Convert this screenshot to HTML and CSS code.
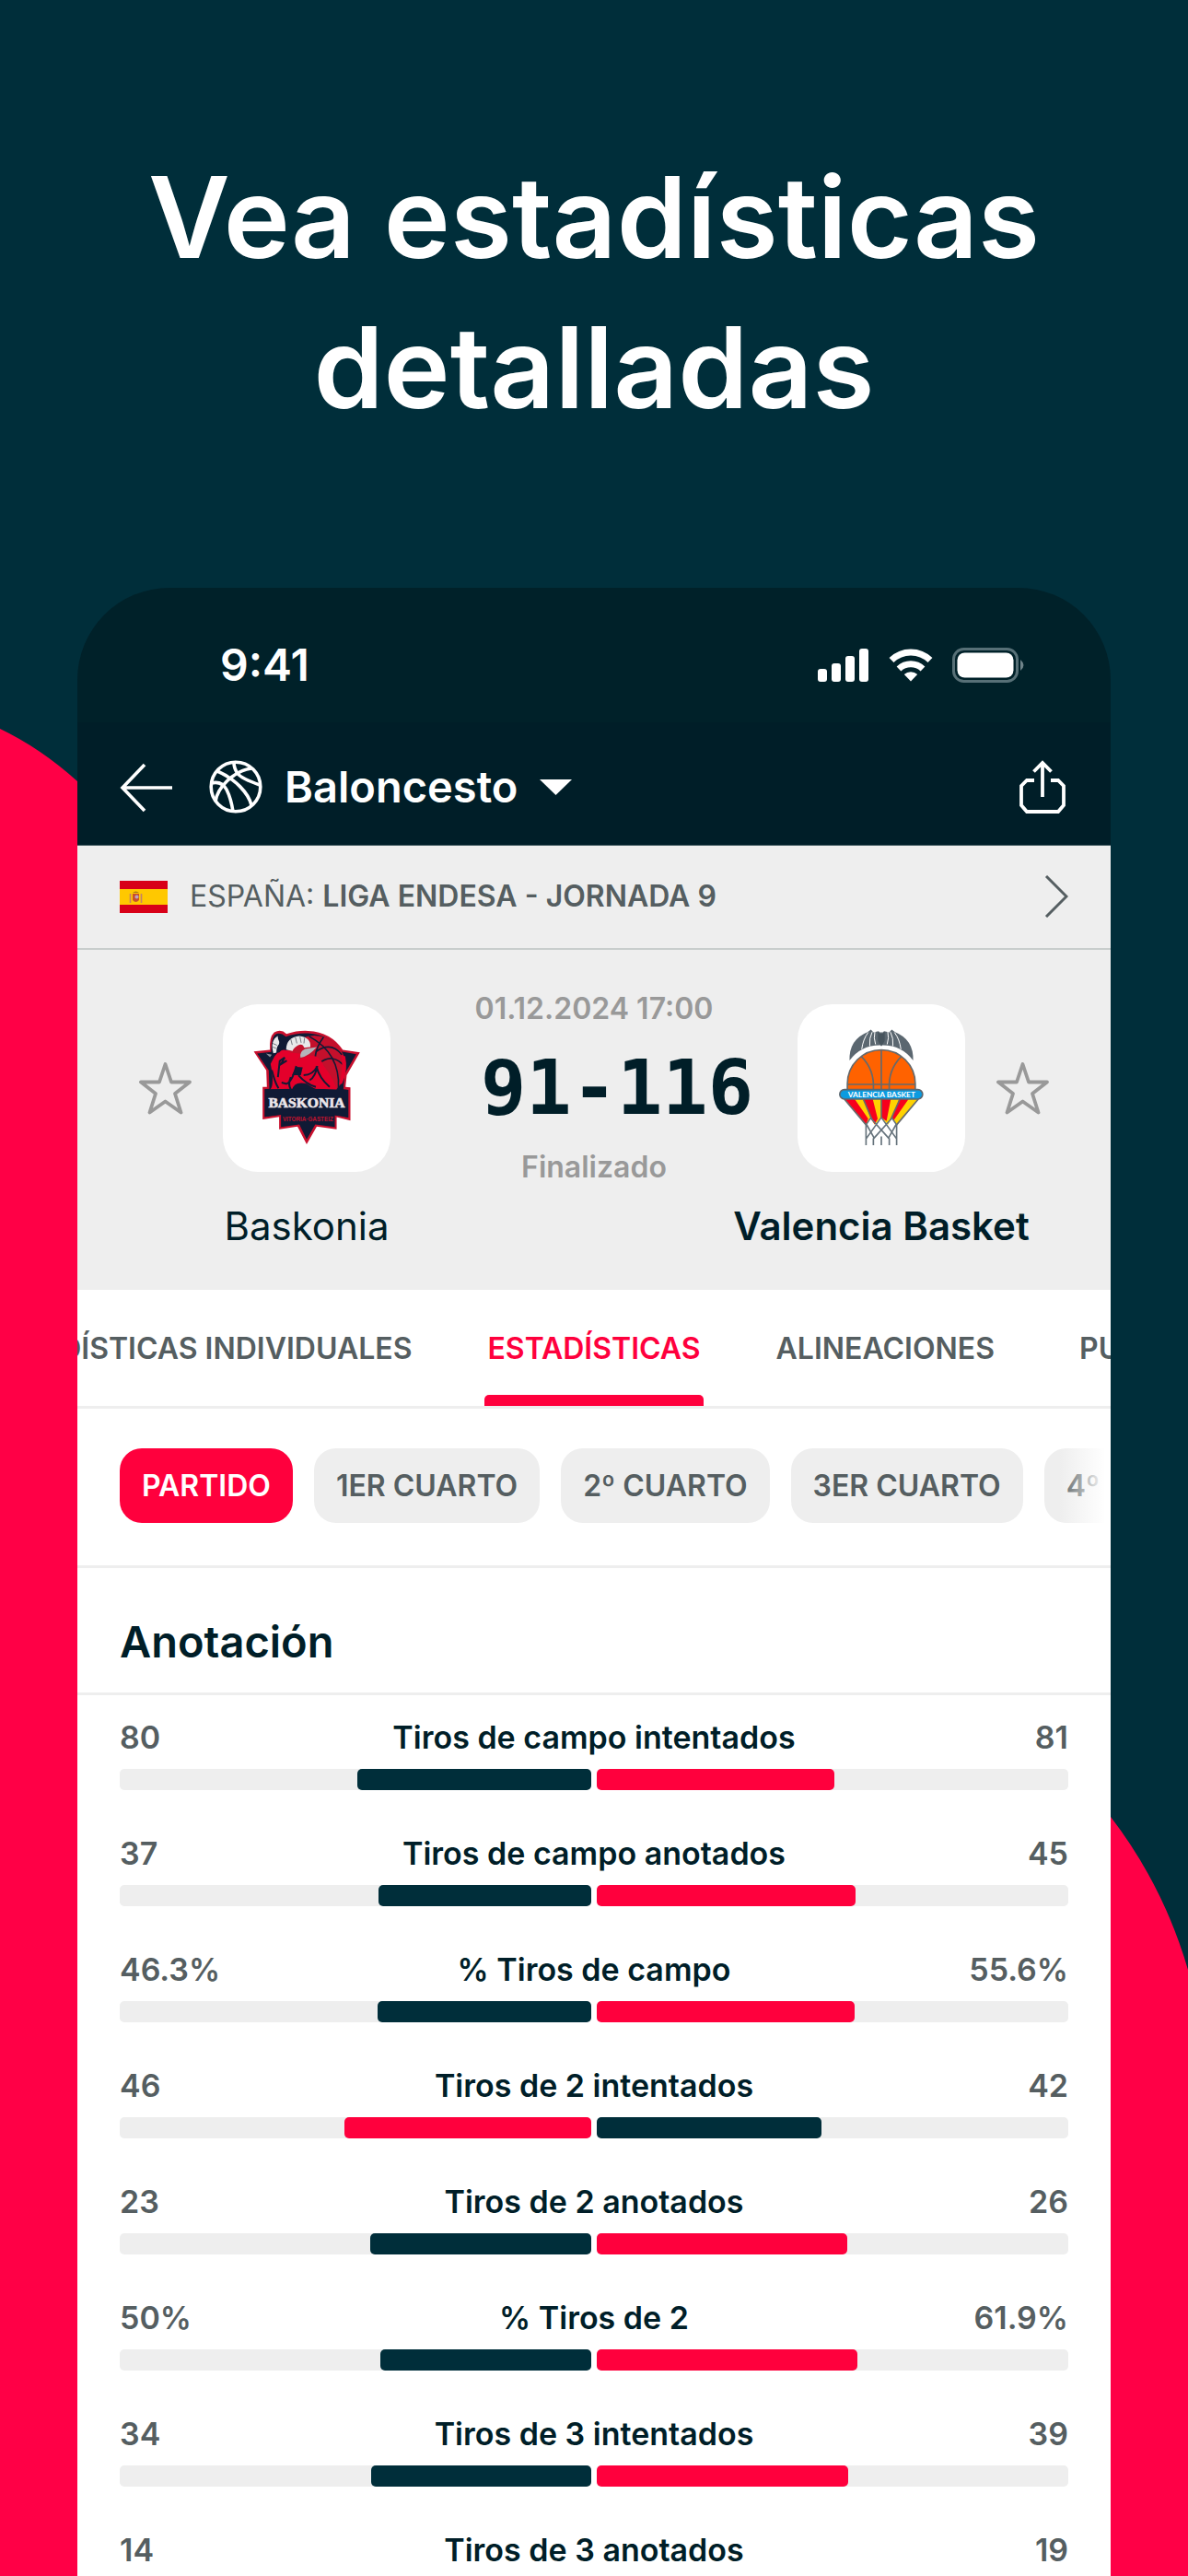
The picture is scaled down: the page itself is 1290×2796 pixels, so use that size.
FILE: index.html
```html
<!DOCTYPE html>
<html lang="es">
<head>
<meta charset="utf-8">
<meta name="viewport" content="width=device-width, initial-scale=1">
<title>Vea estadísticas detalladas</title>
<link rel="stylesheet" href="styles.css">
</head>
<body>
<main class="page">
  <svg class="backdrop" viewBox="0 0 1290 2796" preserveAspectRatio="none" aria-hidden="true">
    <path d="M0 791Q44 812 84 848L600 1400 1206 1972Q1263 2046 1290 2138V2796H0Z" fill="#ff0046"/>
  </svg>

  <h1 class="headline">Vea estadísticas<br>detalladas</h1>

  <div class="phone">
    <div class="status">
      <span class="status-time">9:41</span>
      <div class="status-icons">
        <svg width="56" height="36" viewBox="0 0 56 36" fill="#fff" aria-hidden="true">
          <rect y="22" width="10" height="14" rx="3"/><rect x="15" y="16" width="10" height="20" rx="3"/><rect x="30" y="8" width="10" height="28" rx="3"/><rect x="45" width="10" height="36" rx="3"/>
        </svg>
        <svg width="48" height="36" viewBox="0 0 48 36" aria-hidden="true">
          <g fill="none" stroke="#fff" stroke-width="7"><path d="M3 12.500a30 30 0 0 1 42 0"/><path d="M11 22a19 19 0 0 1 26 0"/></g>
          <path d="M24 35.500 16.800 28a10.500 10.500 0 0 1 14.400 0Z" fill="#fff"/>
        </svg>
        <svg width="78" height="38" viewBox="0 0 78 38" aria-hidden="true">
          <rect x="1.500" y="1.500" width="69" height="35" rx="11" fill="none" stroke="#577077" stroke-width="3"/>
          <rect x="5.500" y="5.500" width="61" height="27" rx="8" fill="#fff"/>
          <path d="M74 13q7 6 0 12Z" fill="#6f848a"/>
        </svg>
      </div>
    </div>

    <header class="topbar">
      <button class="icon-button" type="button" aria-label="Atrás">
        <svg width="57" height="57" viewBox="0 0 57 57" fill="none" stroke="#fff" stroke-width="3.600" aria-hidden="true"><path d="M57 29H3M27 4 3 29l24 25"/></svg>
      </button>
      <button class="sport" type="button">
        <svg width="58" height="58" viewBox="0 0 58 58" fill="none" stroke="#fff" stroke-width="3.600" aria-hidden="true">
          <circle cx="29" cy="29" r="26.800"/>
          <path d="M9 12C28 20 43 36 46 49"/>
          <path d="M46 9C26 12 9 30 7 45"/>
          <path d="M27 2.500Q27 9 31 14.500T55 27"/>
          <path d="M2 25Q14 22 19 32T26 56"/>
        </svg>
        <span>Baloncesto</span>
        <svg width="35" height="17" viewBox="0 0 35 17" fill="#fff" aria-hidden="true"><path d="M0 0h35L17.500 17Z"/></svg>
      </button>
      <button class="icon-button share" type="button" aria-label="Compartir">
        <svg width="50" height="58" viewBox="0 0 50 58" fill="none" stroke="#fff" stroke-width="3.800" aria-hidden="true"><path d="M16 22H8l-6 6v21l6 7h34l6-7V28l-6-6h-8M25 40V3M15.500 12.500 25 3l9.500 9.500"/></svg>
      </button>
    </header>

    <a class="league" href="#liga">
      <svg width="52" height="35" viewBox="0 0 52 35" aria-hidden="true">
        <path d="M0 0h52v35H0Z" fill="#d80018"/><path d="M0 9h52v17H0Z" fill="#ffc800"/>
        <path d="M14 14h7v7q-3.500 4-7 0Z" fill="#c8502a"/><path d="M14 13q3.500-3 7 0Z" fill="#a87416"/><path d="M11.500 14v10M23.500 14v10" stroke="#c4806a" stroke-width="1.600"/><circle cx="18.500" cy="17.500" r="2" fill="#b9a3c4"/>
      </svg>
      <span class="league-name">ESPAÑA: <b>LIGA ENDESA - JORNADA 9</b></span>
      <svg width="26" height="46" viewBox="0 0 26 46" fill="none" stroke="#555e61" stroke-width="3" aria-hidden="true"><path d="M2 1 24 23 2 45"/></svg>
    </a>

    <section class="match">
      <div class="team home">
        <button class="star" type="button" aria-label="Añadir Baskonia a favoritos">
          <svg width="57" height="58" viewBox="0 0 57 58" fill="none" stroke="#999" stroke-width="3.800" stroke-linejoin="round" aria-hidden="true"><path d="M28.500 3 35 22.500H55L39 35 45.500 55.500 28.500 43.500 11.500 55.500 18 35 2 22.500H22Z"/></svg>
        </button>
        <div class="crest">
          <svg viewBox="36 30 548 548" aria-hidden="true">
            <path d="M137 184 190 179Q187 137 204 122 226 109 244 127 281 115 315 117 390 121 428 179L484 187 441 262 437 300 453 302V410L408 399V439L343 430 310 488 280 430 220 439V398L166 406V300L180 300 178 246Z" fill="#c8102e"/>
            <path d="M148 191 194 186Q194 142 206 130 222 119 242 136 278 123 315 125 388 130 422 184L472 193 434 258 430 308 446 310V400L402 390V431L338 423 310 472 286 423 226 431V390L173 398V308L188 306 186 246Z" fill="#101a35"/>
            <circle cx="335" cy="235" r="103" fill="#c4102c"/>
            <g fill="none" stroke="#101a35" stroke-width="5"><path d="M318 135Q420 190 414 305"/><path d="M365 138Q318 200 350 275"/><path d="M340 185Q390 150 425 195"/><path d="M348 225Q395 185 435 235"/></g>
            <path d="M436 200Q446 245 426 290L416 292Q430 245 424 196Z" fill="#e4002b"/>
            <path d="M205 200Q230 165 258 188L292 192 280 214Q345 175 365 230 400 275 408 310H190Q206 295 192 225Z" fill="#e4002b"/>
            <path d="M216 268 222 215 238 204 226 226 245 214M276 232Q262 285 244 290L228 286M196 245Q206 285 218 305M258 268Q248 292 258 308M300 262Q330 262 345 232 338 268 320 278M342 232Q350 270 385 300M283 262Q310 292 340 300" fill="none" stroke="#101a35" stroke-width="6"/>
            <path d="M276 235 297 236 291 262 262 262Z" fill="#101a35"/>
            <path d="M262 310Q270 280 310 290 340 310 350 310Z" fill="#101a35"/>
            <path d="M216 134Q190 147 201 190L211 188Q211 164 224 158Q214 143 216 134Z" fill="#e8e8ea"/>
            <path d="M226 131Q249 134 238 163 232 177 218 190 218 153 226 131Z" fill="#101a35"/>
            <path d="M243 178Q243 139 286 134 325 139 322 170L302 172Q296 156 281 165 266 174 264 183Z" fill="#e8e8ea"/>
            <path d="M258 144 263 163M273 137 278 158M288 136 292 156M303 140 301 158M199 158 213 164M199 170 210 174" fill="none" stroke="#777b85" stroke-width="3"/>
            <path d="M290 205Q285 185 305 176L343 170Q318 199 290 205Z" fill="#b4b4ba"/><path d="M177 191 196 195 190 203Z" fill="#8c8f99"/>
            <path d="M173 308Q310 304 446 310V400Q310 376 173 398Z" fill="#101a35"/>
            <text x="310" y="367" class="crest-word">BASKONIA</text>
            <text x="314" y="413" class="crest-city">VITORIA·GASTEIZ</text>
          </svg>
        </div>
        <span class="team-name">Baskonia</span>
      </div>

      <div class="result">
        <span class="note">01.12.2024 17:00</span>
        <strong class="score">91-116</strong>
        <span class="note">Finalizado</span>
      </div>

      <div class="team away">
        <button class="star" type="button" aria-label="Añadir Valencia Basket a favoritos">
          <svg width="57" height="58" viewBox="0 0 57 58" fill="none" stroke="#999" stroke-width="3.800" stroke-linejoin="round" aria-hidden="true"><path d="M28.500 3 35 22.500H55L39 35 45.500 55.500 28.500 43.500 11.500 55.500 18 35 2 22.500H22Z"/></svg>
        </button>
        <div class="crest">
          <svg viewBox="46 30 548 548" aria-hidden="true">
            <path d="M216 214Q214 145 275 121L286 113 294 122 311 118 315 122H325L329 118 346 122 354 113 365 121Q426 145 424 214 386 162 320 164 254 162 216 214Z" fill="#5b6770"/>
            <path d="M256 177Q260 145 277 122M282 167Q280 140 290 121M301 161Q294 140 299 120M384 177Q380 145 363 122M358 167Q360 140 350 121M339 161Q346 140 341 120" fill="none" stroke="#fff" stroke-width="3"/>
            <path d="M309 120V150L320 168 331 150V120L325 126 315 126Z" fill="#47545d"/>
            <path d="M209 308V290A111 111 0 0 1 431 290V308Z" fill="#ff6200"/>
            <path d="M209 308V290A111 111 0 0 1 431 290V308M209 292H431M320 180V308M256 202Q298 245 294 308M384 202Q342 245 346 308" fill="none" stroke="#66696b" stroke-width="5"/>
            <path d="M201 340H439L370 424 355 402 342 424 320 400 298 424 285 402 272 424Z" fill="#ffd200"/>
            <path d="M201 340H233L277 404 270 422ZM262 340H292L308 404 298 422 285 402ZM320 340H351L337 412 320 400ZM378 340H409L360 410 355 402Z" fill="#f8001c"/>
            <path d="M199 340 270 424M441 340 370 424M262 342 290 408M320 342V400M380 342 350 408" fill="none" stroke="#66696b" stroke-width="5"/>
            <path d="M270 422V491M370 422V491M294 468V491M320 462V491M346 468V491M270 424 285 402 346 470M370 424 355 402 294 470M270 420 296 466M370 420 344 466M320 400 270 470M320 400 370 470" fill="none" stroke="#66737c" stroke-width="5"/>
            <rect x="184" y="309" width="271" height="31" rx="15.500" fill="#0b9be0" stroke="#5b6770" stroke-width="5"/>
            <text x="321" y="334" class="crest-band">VALENCIA BASKET</text>
          </svg>
        </div>
        <span class="team-name winner">Valencia Basket</span>
      </div>
    </section>

    <nav class="tabs" aria-label="Secciones">
      <div class="tabs-side before"><a class="tab" href="#individuales">ESTADÍSTICAS INDIVIDUALES</a></div>
      <a class="tab active" href="#estadisticas" aria-current="page">ESTADÍSTICAS</a>
      <div class="tabs-side"><a class="tab" href="#alineaciones">ALINEACIONES</a><a class="tab" href="#punto">PUNTO A PUNTO</a></div>
    </nav>

    <div class="periods">
      <button class="chip selected" type="button">PARTIDO</button>
      <button class="chip" type="button">1ER CUARTO</button>
      <button class="chip" type="button">2º CUARTO</button>
      <button class="chip" type="button">3ER CUARTO</button>
      <button class="chip" type="button">4º CUARTO</button>
    </div>

    <section class="stats">
      <h2 class="stats-title">Anotación</h2>
      <ul class="stats-list">
        <li class="stat"><span class="value">80</span><span class="label">Tiros de campo intentados</span><span class="value">81</span>
          <div class="bars"><div class="track"><div class="fill" style="width:49.7%"></div></div><div class="track"><div class="fill lead" style="width:50.3%"></div></div></div></li>
        <li class="stat"><span class="value">37</span><span class="label">Tiros de campo anotados</span><span class="value">45</span>
          <div class="bars"><div class="track"><div class="fill" style="width:45.1%"></div></div><div class="track"><div class="fill lead" style="width:54.9%"></div></div></div></li>
        <li class="stat"><span class="value">46.3%</span><span class="label">% Tiros de campo</span><span class="value">55.6%</span>
          <div class="bars"><div class="track"><div class="fill" style="width:45.4%"></div></div><div class="track"><div class="fill lead" style="width:54.6%"></div></div></div></li>
        <li class="stat"><span class="value">46</span><span class="label">Tiros de 2 intentados</span><span class="value">42</span>
          <div class="bars"><div class="track"><div class="fill lead" style="width:52.3%"></div></div><div class="track"><div class="fill" style="width:47.7%"></div></div></div></li>
        <li class="stat"><span class="value">23</span><span class="label">Tiros de 2 anotados</span><span class="value">26</span>
          <div class="bars"><div class="track"><div class="fill" style="width:46.9%"></div></div><div class="track"><div class="fill lead" style="width:53.1%"></div></div></div></li>
        <li class="stat"><span class="value">50%</span><span class="label">% Tiros de 2</span><span class="value">61.9%</span>
          <div class="bars"><div class="track"><div class="fill" style="width:44.7%"></div></div><div class="track"><div class="fill lead" style="width:55.3%"></div></div></div></li>
        <li class="stat"><span class="value">34</span><span class="label">Tiros de 3 intentados</span><span class="value">39</span>
          <div class="bars"><div class="track"><div class="fill" style="width:46.6%"></div></div><div class="track"><div class="fill lead" style="width:53.4%"></div></div></div></li>
        <li class="stat"><span class="value">14</span><span class="label">Tiros de 3 anotados</span><span class="value">19</span>
          <div class="bars"><div class="track"><div class="fill" style="width:42.4%"></div></div><div class="track"><div class="fill lead" style="width:57.6%"></div></div></div></li>
      </ul>
    </section>
  </div>
</main>
</body>
</html>
```
FILE: styles.css
```css
* {
  box-sizing: border-box;
}

body {
  margin: 0;
  background: #002e3a;
  color: #001e28;
  font-family: Inter, "Liberation Sans", sans-serif;
  font-size: 32px;
  line-height: 40px;
  font-weight: 600;
}

button {
  margin: 0;
  padding: 0;
  border: 0;
  background: none;
  color: inherit;
  font: inherit;
}

a {
  color: inherit;
  text-decoration: none;
}

svg {
  display: block;
  flex: none;
}

.page {
  position: relative;
  max-height: 100vh;
  overflow: hidden;
}

.backdrop {
  position: absolute;
  inset: 0;
  width: 100%;
  height: 100%;
}

.headline {
  position: relative;
  margin: 0;
  padding: 154px 40px 158px;
  color: #fff;
  font-size: 122px;
  line-height: 163px;
  font-weight: 600;
  text-align: center;
}

.phone {
  position: relative;
  margin: 0 84px;
}

/* Status bar */
.status {
  display: flex;
  justify-content: space-between;
  align-items: center;
  padding: 54px 94px 32px 155px;
  border-radius: 100px 100px 0 0;
  background: #002129;
  color: #fff;
}

.status-time {
  font-size: 48px;
  line-height: 60px;
}

.status-icons {
  display: flex;
  align-items: center;
  gap: 21px;
}

/* Sport bar */
.topbar {
  display: flex;
  align-items: center;
  gap: 40px;
  padding: 41px 49px 34px 46px;
  border-bottom: 1px solid #4a6066;
  background: #001e28;
  color: #fff;
}

.sport {
  display: flex;
  align-items: center;
  gap: 24px;
  font-size: 47px;
  line-height: 58px;
}

.share {
  margin-left: auto;
}

/* League row */
.league {
  display: flex;
  align-items: center;
  gap: 24px;
  padding: 32px 46px 33px;
  border-bottom: 2px solid #c8cdcc;
  background: #eee;
  color: #555e61;
}

.league-name {
  flex: 1;
  font-weight: 400;
}

.league-name b {
  font-weight: 600;
}

/* Match header */
.match {
  display: grid;
  grid-template-columns: auto 1fr auto;
  padding: 44px 67px 45px;
  background: #eee;
}

.team {
  display: grid;
  align-items: center;
  gap: 35px 34px;
  margin-top: 15px;
}

.home {
  grid-template: "star crest" 182px ". name" 48px / 57px 182px;
}

.away {
  grid-template: "crest star" 182px "name ." 48px / 182px 57px;
}

.star {
  grid-area: star;
}

.crest {
  grid-area: crest;
  border-radius: 38px;
  background: #fff;
}

.crest svg {
  width: 100%;
}

.crest-word {
  fill: #ece6ea;
  stroke: #ece6ea;
  stroke-width: 2px;
  font: 700 47px "Liberation Serif", serif;
  text-anchor: middle;
}

.crest-city {
  fill: #c0122e;
  font: 700 19px "Liberation Sans", sans-serif;
  text-anchor: middle;
}

.crest-band {
  fill: #fff;
  font: 700 25px Lato, sans-serif;
  text-anchor: middle;
}

.team-name {
  grid-area: name;
  justify-self: center;
  font-size: 42px;
  line-height: 48px;
  font-weight: 400;
  white-space: nowrap;
}

.team-name.winner {
  font-weight: 600;
}

.result {
  display: flex;
  flex-direction: column;
  align-items: center;
}

.note {
  color: #999;
}

.score {
  padding-left: 50px;
  font-family: "DejaVu Sans Mono", monospace;
  font-size: 82px;
  line-height: 132px;
  font-weight: 700;
}

/* Section tabs */
.tabs {
  display: grid;
  grid-template-columns: minmax(0, 1fr) auto minmax(0, 1fr);
  column-gap: 82px;
  border-bottom: 3px solid #eee;
  background: #fff;
  color: #555e61;
  overflow: hidden;
}

.tabs-side {
  display: flex;
  gap: 92px;
}

.tabs-side.before {
  justify-content: flex-end;
}

.tab {
  padding: 44px 0 30px;
  border-bottom: 12px solid transparent;
  white-space: nowrap;
}

.tab.active {
  display: grid;
  row-gap: 30px;
  padding: 44px 0 0;
  border: 0;
  color: #ff003d;
  text-align: center;
}

.tab.active::after {
  content: "";
  height: 12px;
  margin: 0 -3px;
  border-radius: 5px 5px 0 0;
  background: #ff003d;
}

/* Period chips */
.periods {
  position: relative;
  display: flex;
  gap: 23px;
  padding: 43px 46px 46px;
  border-bottom: 3px solid #eee;
  background: #fff;
  overflow: hidden;
}

.periods::after {
  content: "";
  position: absolute;
  inset: 0 0 0 auto;
  width: 56px;
  background: linear-gradient(to right, transparent, #fff 90%);
}

.chip {
  flex: none;
  height: 81px;
  padding: 0 24px;
  border-radius: 24px;
  background: #eee;
  color: #555e61;
  white-space: nowrap;
}

.chip.selected {
  background: #ff003d;
  color: #fff;
}

/* Statistics */
.stats {
  background: #fff;
}

.stats-title {
  margin: 0;
  padding: 52px 46px 27px;
  border-bottom: 3px solid #eee;
  font-size: 47px;
  line-height: 56px;
  font-weight: 600;
}

.stats-list {
  display: flex;
  flex-direction: column;
  gap: 47px;
  margin: 0;
  padding: 24px 46px 47px;
  list-style: none;
}

.stat {
  display: grid;
  grid-template-columns: 1fr auto 1fr;
  row-gap: 12px;
  font-size: 34px;
  line-height: 44px;
}

.value {
  color: #555e61;
}

.label + .value {
  text-align: right;
}

.bars {
  grid-column: 1 / -1;
  display: flex;
  gap: 6px;
}

.track {
  flex: 1;
  display: flex;
  height: 23px;
  border-radius: 5px;
  background: #eee;
}

.track:first-child {
  justify-content: flex-end;
}

.fill {
  border-radius: 5px;
  background: #002e3a;
}

.fill.lead {
  background: #ff003d;
}
```
